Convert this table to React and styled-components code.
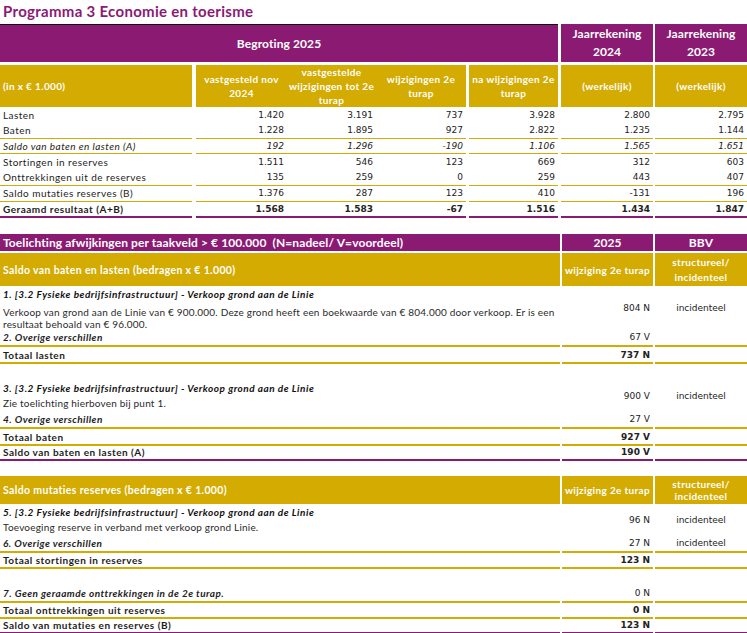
import React from 'react'
import styled, { createGlobalStyle } from 'styled-components'

const purple = '#8b1a73'
const gold = '#d4ab00'

const GlobalStyle = createGlobalStyle`
  * { box-sizing: border-box; }
  body {
    margin: 0;
    background: #fff;
    color: #1d1d1d;
    font-family: Lato, "Noto Sans", sans-serif;
  }
`

const Page = styled.div`
  width: 747px;
  height: 633px;
  overflow: hidden;
`

const PageTitle = styled.h1`
  margin: 0;
  height: 24px;
  padding: 2px 0 0 3px;
  font-size: 15px;
  line-height: 19px;
  font-weight: 700;
  letter-spacing: 0.3px;
  color: ${purple};
`

// top table: label + 3 begroting columns + na wijzigingen + 2 jaarrekening
const TopRow = styled.div`
  display: grid;
  grid-template-columns: 192px 95px 89px 90px 92px 95px 94px;
  margin-bottom: ${p => p.$after || 0}px;
`

// second table: description + wijziging + bbv
const NoteRow = styled.div`
  display: grid;
  grid-template-columns: 560px 93px 94px;
  margin-top: ${p => p.$before || 0}px;
  margin-bottom: ${p => p.$after || 0}px;
`

const Head = styled.div`
  grid-column: ${p => p.$span || 'auto'};
  margin-left: ${p => p.$gap || 0}px;
  height: ${p => p.$h}px;
  background: ${p => (p.$gold ? gold : purple)};
  color: #fff;
  font-weight: 700;
  font-size: ${p => p.$size || 10}px;
  line-height: ${p => p.$lh || 14}px;
  letter-spacing: ${p => (p.$gold ? 0.35 : 0.1)}px;
  white-space: nowrap;
  display: flex;
  align-items: center;
  justify-content: ${p => (p.$left ? 'flex-start' : 'center')};
  text-align: ${p => (p.$left ? 'left' : 'center')};
  padding: 0 ${p => (p.$left ? 3 : 1)}px;
  border-top: ${p => (p.$rule ? '1px solid #111' : 'none')};
`

const lineWidth = (line, thick) => (line ? (line === 'purple' || thick ? 2 : 1) : 0)

const Cell = styled.div`
  margin-left: ${p => p.$gap || 0}px;
  height: ${p => (p.$h ? `${p.$h}px` : 'auto')};
  line-height: ${p => (p.$h ? p.$h - lineWidth(p.$line, p.$thick) : 16)}px;
  padding: ${p => (p.$low ? '1px 3px 0' : '0 3px')};
  white-space: nowrap;
  font-size: 10px;
  letter-spacing: ${p => (p.$bold ? 0.5 : 0.45)}px;
  font-style: ${p => (p.$italic ? 'italic' : 'normal')};
  font-weight: ${p => (p.$bold ? 700 : 400)};
  text-align: ${p => p.$align || 'left'};
  border-bottom: ${p =>
    p.$line
      ? `${lineWidth(p.$line, p.$thick)}px solid ${p.$line === 'purple' ? purple : gold}`
      : 'none'};
  display: ${p => (p.$mid ? 'flex' : 'block')};
  align-items: center;
  justify-content: ${p => (p.$align === 'right' ? 'flex-end' : p.$align === 'center' ? 'center' : 'flex-start')};
`

const Num = styled(Cell)`
  font-family: "DejaVu Sans", sans-serif;
  font-size: 9px;
  letter-spacing: 0;
  color: #222;
`

const ItemTitle = styled.div`
  height: 17px;
  line-height: 17px;
  font-weight: 700;
  font-style: italic;
  letter-spacing: 0.5px;
  color: #111;
`

const ItemDesc = styled.div`
  line-height: 12px;
  padding: ${p => (p.$loose ? '3px 0 0' : '0 0 2px')};
  white-space: normal;
  letter-spacing: 0.2px;
  color: #2a2a2a;
`

const Spacer = styled.div`
  height: ${p => p.$h}px;
`

const topGaps = [4, 0, 0, 3, 3, 2]

const topRows = [
  { label: 'Lasten', v: ['1.420', '3.191', '737', '3.928', '2.800', '2.795'], h: 16 },
  { label: 'Baten', v: ['1.228', '1.895', '927', '2.822', '1.235', '1.144'], h: 16, line: 'gold' },
  { label: 'Saldo van baten en lasten (A)', v: ['192', '1.296', '-190', '1.106', '1.565', '1.651'], h: 15, line: 'gold', italic: true },
  { label: 'Stortingen in reserves', v: ['1.511', '546', '123', '669', '312', '603'], h: 16 },
  { label: 'Onttrekkingen uit de reserves', v: ['135', '259', '0', '259', '443', '407'], h: 16, line: 'gold' },
  { label: 'Saldo mutaties reserves (B)', v: ['1.376', '287', '123', '410', '-131', '196'], h: 16, line: 'gold' },
  { label: 'Geraamd resultaat (A+B)', v: ['1.568', '1.583', '-67', '1.516', '1.434', '1.847'], h: 16, line: 'purple', bold: true },
]

function TopLine({ row }) {
  return (
    <TopRow>
      <Cell $h={row.h} $line={row.line} $italic={row.italic} $bold={row.bold}>{row.label}</Cell>
      {row.v.map((v, i) => (
        <Num key={i} $h={row.h} $gap={topGaps[i]} $line={row.line} $italic={row.italic} $bold={row.bold} $align="right">
          {v}
        </Num>
      ))}
    </TopRow>
  )
}

function Item({ title, desc, value, kind, loose }) {
  return (
    <NoteRow>
      <Cell>
        <ItemTitle>{title}</ItemTitle>
        <ItemDesc $loose={loose}>{desc}</ItemDesc>
      </Cell>
      <Num $gap={2} $mid $align="right">{value}</Num>
      <Num $gap={2} $mid $align="center">{kind}</Num>
    </NoteRow>
  )
}

function Line({ label, value, kind, h = 17, line, bold, italic, low }) {
  return (
    <NoteRow>
      <Cell $h={h} $line={line} $thick $bold={bold} $italic={italic} $low={low}>{label}</Cell>
      <Num $h={h} $gap={2} $line={line} $thick $bold={bold} $low={low} $align="right">{value}</Num>
      <Num $h={h} $gap={2} $line={line} $thick $low={low} $align="center">{kind}</Num>
    </NoteRow>
  )
}

function NoteHead({ title, h, lh, before }) {
  return (
    <NoteRow $before={before}>
      <Head $gold $left $h={h} $size={10.5}>{title}</Head>
      <Head $gold $gap={2} $h={h}>wijziging 2e turap</Head>
      <Head $gold $gap={2} $h={h} $lh={lh}>structureel/<br />incidenteel</Head>
    </NoteRow>
  )
}

const fysiek = '[3.2 Fysieke bedrijfsinfrastructuur] - Verkoop grond aan de Linie'
const lbl = text => <i><b>{text}</b></i>

export default function App() {
  return (
    <Page>
      <GlobalStyle />
      <PageTitle>Programma 3 Economie en toerisme</PageTitle>

      <TopRow $after={3}>
        <Head $span="1 / 6" $h={38} $size={12} $rule>Begroting 2025</Head>
        <Head $gap={3} $h={38} $size={12} $lh={18}>Jaarrekening<br />2024</Head>
        <Head $gap={2} $h={38} $size={12} $lh={18}>Jaarrekening<br />2023</Head>
      </TopRow>
      <TopRow>
        <Head $gold $left $h={42}>(in x € 1.000)</Head>
        <Head $gold $gap={4} $h={42}>vastgesteld nov<br />2024</Head>
        <Head $gold $h={42}>vastgestelde<br />wijzigingen tot 2e<br />turap</Head>
        <Head $gold $h={42}>wijzigingen 2e<br />turap</Head>
        <Head $gold $gap={3} $h={42}>na wijzigingen 2e<br />turap</Head>
        <Head $gold $gap={3} $h={42}>(werkelijk)</Head>
        <Head $gold $gap={2} $h={42}>(werkelijk)</Head>
      </TopRow>
      {topRows.map(r => <TopLine key={r.label} row={r} />)}

      <NoteRow $before={16} $after={2}>
        <Head $left $h={17} $size={12} $lh={17}>Toelichting afwijkingen per taakveld &gt; € 100.000&nbsp; (N=nadeel/ V=voordeel)</Head>
        <Head $gap={2} $h={17} $size={12} $lh={17}>2025</Head>
        <Head $gap={2} $h={17} $size={12} $lh={17}>BBV</Head>
      </NoteRow>
      <NoteHead title="Saldo van baten en lasten (bedragen x € 1.000)" h={33} lh={15} />
      <Item
        loose
        title={`1. ${fysiek}`}
        desc="Verkoop van grond aan de Linie van € 900.000. Deze grond heeft een boekwaarde van € 804.000 door verkoop. Er is een resultaat behoald van € 96.000."
        value="804 N"
        kind="incidenteel"
      />
      <Line label={lbl('2. Overige verschillen')} value="67 V" line="gold" />
      <Line label="Totaal lasten" value="737 N" line="gold" bold low />
      <Spacer $h={16} />
      <Item title={`3. ${fysiek}`} desc="Zie toelichting hierboven bij punt 1." value="900 V" kind="incidenteel" />
      <Line label={lbl('4. Overige verschillen')} value="27 V" line="gold" h={18} />
      <Line label="Totaal baten" value="927 V" line="gold" bold low />
      <Line label="Saldo van baten en lasten (A)" value="190 V" line="purple" bold h={15} />

      <NoteHead title="Saldo mutaties reserves (bedragen x € 1.000)" h={28} lh={12} before={15} />
      <Item
        title={`5. ${fysiek}`}
        desc="Toevoeging reserve in verband met verkoop grond Linie."
        value="96 N"
        kind="incidenteel"
      />
      <Line label={lbl('6. Overige verschillen')} value="27 N" kind="incidenteel" line="gold" h={18} />
      <Line label="Totaal stortingen in reserves" value="123 N" line="gold" bold h={16} />
      <Spacer $h={16} />
      <Line label={lbl('7. Geen geraamde onttrekkingen in de 2e turap.')} value="0 N" line="gold" h={18} />
      <Line label="Totaal onttrekkingen uit reserves" value="0 N" line="gold" bold h={16} />
      <Line label="Saldo van mutaties en reserves (B)" value="123 N" line="purple" bold h={15} />
    </Page>
  )
}
